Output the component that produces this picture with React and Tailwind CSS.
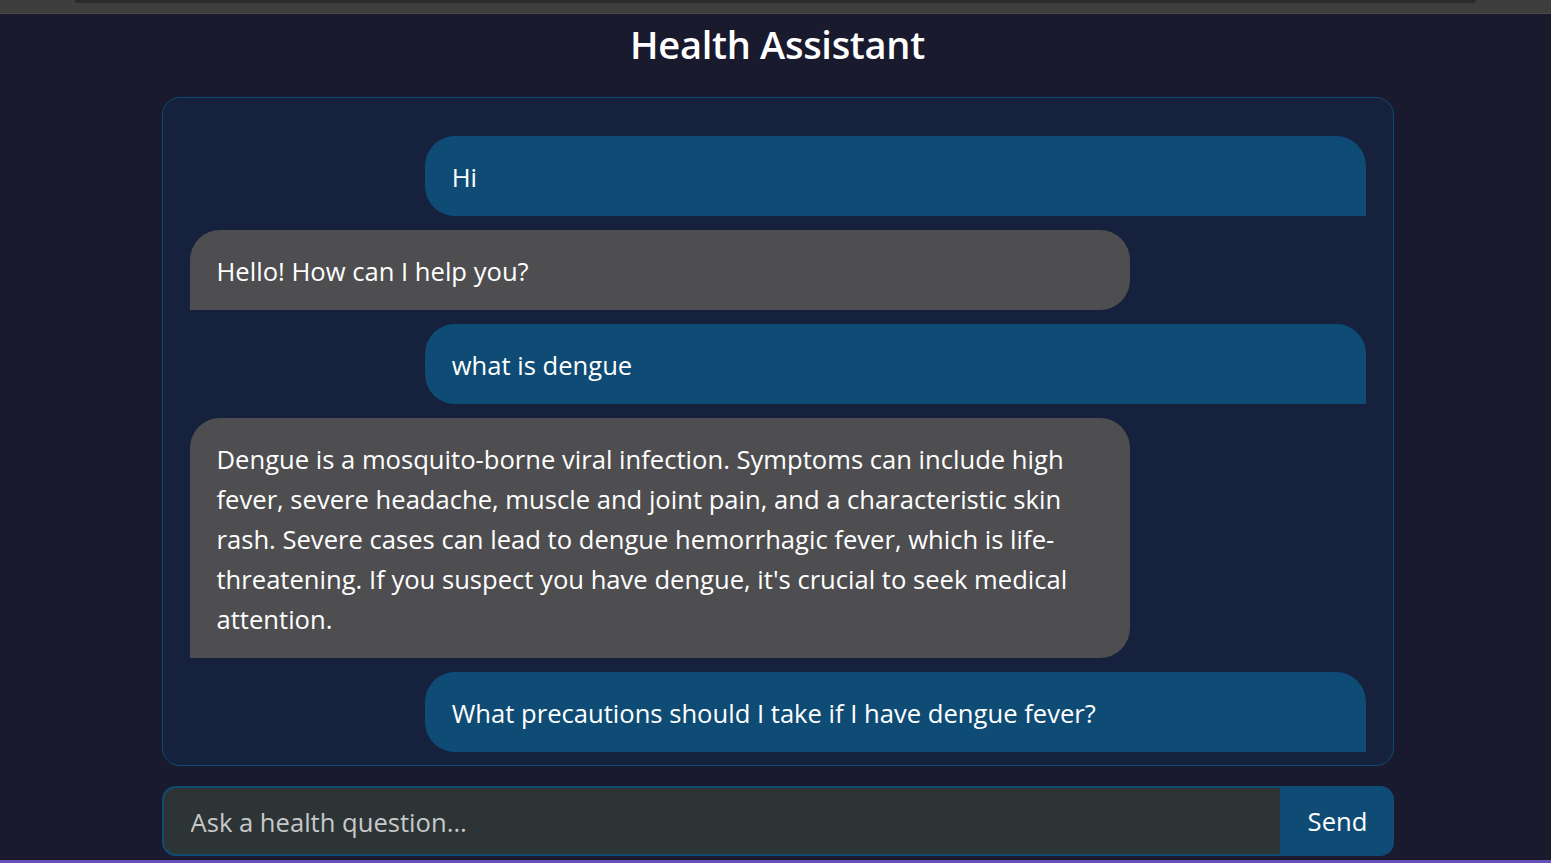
import React from 'react';

const messages = [
  { id: 1, from: 'user', text: 'Hi' },
  { id: 2, from: 'bot', text: 'Hello! How can I help you?' },
  { id: 3, from: 'user', text: 'what is dengue' },
  {
    id: 4,
    from: 'bot',
    text: "Dengue is a mosquito-borne viral infection. Symptoms can include high fever, severe headache, muscle and joint pain, and a characteristic skin rash. Severe cases can lead to dengue hemorrhagic fever, which is life-threatening. If you suspect you have dengue, it's crucial to seek medical attention.",
  },
  { id: 5, from: 'user', text: 'What precautions should I take if I have dengue fever?' },
];

export default function App() {
  return (
    <div className="min-h-screen flex flex-col bg-[#1a1a2e] font-['Open_Sans','Noto_Sans',sans-serif]">
      {/* browser strip */}
      <div className="h-[14px] bg-[#3e3e3e] border-b border-[#4a4a48] px-[75px]">
        <div className="h-[3px] bg-[#2b2b2b] rounded-b-md"></div>
      </div>

      <main className="flex-1 flex flex-col items-center pl-1">
        <h1 className="text-white text-[38px] font-semibold leading-none mt-[11px] mb-[34px] tracking-[-0.3px]">
          Health Assistant
        </h1>

        {/* Chat window */}
        <div className="w-[1232px] h-[669px] overflow-hidden rounded-[18px] border border-[#0f4c75] bg-[#16213e] px-[27px] pt-[38px]">
          <div className="flex flex-col gap-[14px]">
            {messages.map((m) =>
              m.from === 'user' ? (
                <div key={m.id} className="flex justify-end">
                  <div className="w-[80%] bg-[#0f4c75] text-white text-[25.6px] leading-[40px] px-[27px] pt-[22px] pb-[18px] rounded-t-[30px] rounded-bl-[30px]">
                    {m.text}
                  </div>
                </div>
              ) : (
                <div key={m.id} className="flex justify-start">
                  <div className="w-[80%] bg-[#4e4e50] text-white text-[25.6px] leading-[40px] px-[27px] pt-[22px] pb-[18px] rounded-t-[30px] rounded-br-[30px]">
                    {m.text}
                  </div>
                </div>
              )
            )}
          </div>
        </div>

        {/* Input row */}
        <div className="w-[1232px] flex mt-[20px]">
          <input
            type="text"
            placeholder="Ask a health question..."
            className="flex-1 h-[70px] bg-[#2d3436] border-2 border-[#0f4c75] rounded-l-[14px] px-[27px] pt-[2px] text-[25.6px] text-white placeholder:text-[#c8c8c8] outline-none"
          />
          <button className="w-[112px] h-[70px] bg-[#0f4c75] text-white text-[25.6px] pt-[2px] rounded-r-[14px]">
            Send
          </button>
        </div>
      </main>

      <div className="h-[3px] bg-[#6a4fb6]"></div>
    </div>
  );
}
